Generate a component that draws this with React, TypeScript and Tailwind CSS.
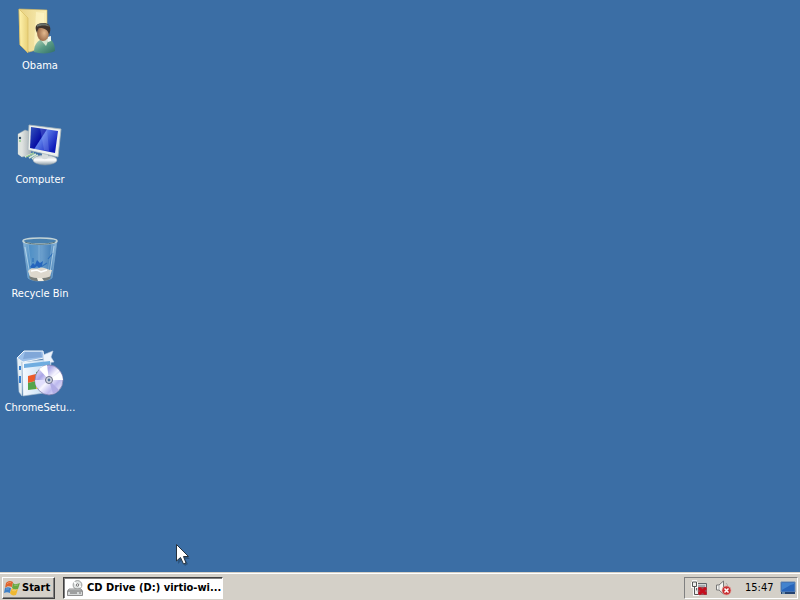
import type { ReactNode } from "react";

function UserFolderIcon() {
  return (
    <svg viewBox="0 0 48 48" className="size-12" aria-hidden="true">
      <defs>
        <linearGradient id="folder" x1="0" x2="1"><stop stopColor="#fff3ae" /><stop offset="1" stopColor="#e8d078" /></linearGradient>
        <linearGradient id="back" x1="0" x2="1"><stop stopColor="#e9d283" /><stop offset="1" stopColor="#f8eeb8" /></linearGradient>
        <linearGradient id="coat" x1="0" y1="0" x2="1" y2="1"><stop stopColor="#b9d8bc" /><stop offset=".5" stopColor="#5b9c86" /><stop offset="1" stopColor="#2f6d66" /></linearGradient>
        <radialGradient id="face" cx=".6" cy=".5"><stop stopColor="#e3b98e" /><stop offset="1" stopColor="#a0704d" /></radialGradient>
      </defs>
      <path d="M3 1L31 2V39L13 44L4 37Z" fill="url(#back)" stroke="#d5b95e" strokeWidth=".6" />
      <path d="M20 4L28 5V34L18 38Z" fill="#fff6c9" opacity=".6" />
      <path d="M3 1L12 10V45L4 37Z" fill="url(#folder)" stroke="#d9bf66" strokeWidth=".7" />
      <path d="M18 44C18 36 22 32 27 31L34 31C37 33 39 37 39 43C34 46 24 46 18 44Z" fill="url(#coat)" />
      <path d="M24 31L33 31L30 38Z" fill="#d5e4cf" />
      <path d="M31 29L35 28L35 33L32 34Z" fill="#edf4ef" />
      <ellipse cx="27" cy="25" rx="6" ry="8" fill="url(#face)" />
      <path d="M21 25C17 17 22 15 28 15C34 15 36 20 33 27C32 22 29 20 24 20C22 20 22 22 21 25Z" fill="#3f332b" />
      <path d="M21 17C25 14 32 15 34 19C30 17 25 17 21 19Z" fill="#69716a" />
    </svg>
  );
}

function ComputerIcon() {
  return (
    <svg viewBox="0 0 48 48" className="size-12" aria-hidden="true">
      <defs>
        <linearGradient id="screen" x1="0" y1="0" x2="1" y2=".6"><stop stopColor="#3558bd" /><stop offset=".45" stopColor="#0810a5" /><stop offset=".47" stopColor="#0810a5" /><stop offset=".5" stopColor="#5c7dea" /><stop offset="1" stopColor="#0c18b8" /></linearGradient>
        <linearGradient id="tower" x1="0" x2="1"><stop stopColor="#f9faf5" /><stop offset="1" stopColor="#a6afb4" /></linearGradient>
        <linearGradient id="base" x1="0" y1="0" x2="0" y2="1"><stop stopColor="#bac2c5" /><stop offset=".5" stopColor="#fff" /><stop offset="1" stopColor="#899aa5" /></linearGradient>
      </defs>
      <path d="M2 12L9 8L15 10V33L6 35L2 32Z" fill="url(#tower)" stroke="#9ba8ae" strokeWidth=".5" />
      <path d="M2 12L6 14V35L2 32Z" fill="#dfe4e0" />
      <circle cx="4" cy="16" r="1.2" fill="#36506a" /><circle cx="4" cy="19" r=".7" fill="#3cae36" />
      <path d="M9 35L18 31M13 36L20 32M16 37L22 33" stroke="#d9ead3" strokeWidth="1.8" />
      <path d="M10 35L18 31" stroke="#62ab55" strokeWidth=".7" />
      <ellipse cx="29" cy="38" rx="12" ry="5" fill="url(#base)" stroke="#8c9ba6" strokeWidth=".5" />
      <path d="M26 31H32V36C30 38 26 37 26 36Z" fill="#d7dcdd" />
      <path d="M13 3L45 7L42 35L12 28Z" fill="#edf0ed" stroke="#a8b6bd" strokeWidth=".8" />
      <path d="M15 5L42 9L39 31L14 26Z" fill="url(#screen)" />
      <path d="M24 6L31 7L33 29L28 28Z" fill="#9eb8fa" opacity=".25" />
    </svg>
  );
}

function RecycleIcon() {
  return (
    <svg viewBox="0 0 48 48" className="size-12" aria-hidden="true">
      <defs><linearGradient id="glass" x1="0" x2="1"><stop stopColor="#a8cfe9" /><stop offset=".2" stopColor="#579bd0" /><stop offset=".55" stopColor="#78acd7" /><stop offset=".8" stopColor="#4e8ac1" /><stop offset="1" stopColor="#b1d7ee" /></linearGradient></defs>
      <path d="M7 5L12 42C16 46 31 46 36 42L41 5Z" fill="url(#glass)" opacity=".78" stroke="#8ebadb" strokeWidth=".7" />
      <path d="M12 8L16 38M23 8V33M36 8L32 37" stroke="#b7d8ed" opacity=".3" />
      <path d="M14 31L17 27L19 29L21 24L24 27L27 25L26 30L23 32L21 30L17 33Z" fill="#2565bd" />
      <path d="M17 22V26M25 31L31 27M32 23L37 17" fill="none" stroke="#2e6fb9" strokeWidth="1.1" />
      <path d="M12 35C17 30 19 34 23 32C28 30 31 34 36 34L34 41C29 45 18 45 14 41Z" fill="#ded8cd" />
      <path d="M15 35L21 34L25 36L31 34" fill="none" stroke="#fff" strokeWidth="1.5" />
      <path d="M13 40C19 43 29 43 35 40L34 43C29 46 18 46 14 43Z" fill="#777c79" />
      <path d="M21 42L26 42L28 45H22Z" fill="#f4f0e5" />
      <ellipse cx="24" cy="5" rx="17" ry="3" fill="#477fae" stroke="#c3d3d6" strokeWidth="1.5" />
      <path d="M9 6C16 9 32 9 39 6" fill="none" stroke="#58747c" />
      <path d="M9 11L14 39M38 10L34 37" stroke="#d7edf8" opacity=".6" />
    </svg>
  );
}

function SetupIcon() {
  return (
    <svg viewBox="0 0 48 48" className="size-12" aria-hidden="true">
      <defs>
        <linearGradient id="box" x1="0" x2="1"><stop stopColor="#f6faff" /><stop offset="1" stopColor="#b9d7f1" /></linearGradient>
        <linearGradient id="disc" x1="0" y1="0" x2="1" y2="1"><stop stopColor="#fff" /><stop offset=".3" stopColor="#aaa5e6" /><stop offset=".5" stopColor="#f7f6ff" /><stop offset=".7" stopColor="#bcb9ee" /><stop offset="1" stopColor="#fff" /></linearGradient>
      </defs>
      <path d="M1 8L6 11V46L3 42Z" fill="#e6eff5" stroke="#9fbad1" strokeWidth=".6" />
      <path d="M6 12L35 9V42L7 46Z" fill="url(#box)" stroke="#a2b9cc" strokeWidth=".6" />
      <path d="M1 8L8 1L27 1L28 8L7 12Z" fill="#9bbfe9" stroke="#f1f7fc" strokeWidth="1" />
      <path d="M9 2L25 2L26 7L7 9Z" fill="#759dd0" opacity=".7" />
      <path d="M27 5L37 1L35 7L38 12L28 13Z" fill="#edf4fc" stroke="#c0d0e5" strokeWidth=".6" />
      <path d="M8 14L34 11V15L8 18Z" fill="#70ade0" />
      <path d="M3 16H5V20H3ZM3 26H5V33H3Z" fill="#387fd0" />
      <path d="M12 26L20 24V31L12 33Z" fill="#ed5b29" /><path d="M20 22L29 20V30L20 32Z" fill="#55aa41" />
      <path d="M12 33L20 31V39L12 40Z" fill="#54a44b" /><path d="M20 31L27 30V38L20 39Z" fill="#eebd27" />
      <ellipse cx="33" cy="30" rx="14" ry="15" fill="url(#disc)" stroke="#8180ac" strokeWidth=".8" />
      <path d="M33 30L23 19A15 15 0 0 1 31 15Z" fill="#fff" /><path d="M33 30L44 22A15 15 0 0 1 47 30Z" fill="#fff" />
      <path d="M33 30L43 40A15 15 0 0 1 37 44Z" fill="#b0ace5" /><path d="M33 30L21 38A15 15 0 0 1 19 30Z" fill="#e1dffc" />
      <circle cx="33" cy="30" r="3.5" fill="#d1d5e1" stroke="#686d86" strokeWidth="1" /><circle cx="33" cy="30" r="1.4" fill="#537398" />
    </svg>
  );
}

function StartLogo() {
  return (
    <svg viewBox="0 0 16 16" className="size-4 shrink-0" aria-hidden="true">
      <path d="M2 3C5 0 7 1 9 2L8 7C5 6 3 6 1 8Z" fill="#e0642c" />
      <path d="M9 3C11 5 13 4 16 3L14 9C11 10 9 9 8 8Z" fill="#67a83e" />
      <path d="M1 8C3 7 5 7 7 8L6 13C4 12 2 12 0 13Z" fill="#3e80c7" />
      <path d="M8 8C10 10 12 10 14 9L12 15C9 16 7 15 6 13Z" fill="#efb831" />
      <path d="M3 4C5 2 6 2 7 3M10 5C11 6 13 5 14 5M2 9H5M8 10C10 11 11 11 12 10" fill="none" stroke="#fff" strokeWidth=".8" opacity=".35" />
    </svg>
  );
}

function DriveIcon() {
  return (
    <svg viewBox="0 0 16 16" className="size-4 shrink-0" aria-hidden="true">
      <circle cx="10.5" cy="5" r="4.4" fill="#e2e5e4" stroke="#858989" strokeWidth=".8" />
      <path d="M10 5L7 2M11 5L14 7" stroke="#fff" strokeWidth="1.5" />
      <circle cx="10.5" cy="5" r="1.2" fill="#fff" stroke="#777" />
      <path d="M2 9H14L15.5 11V15.5H.5V11Z" fill="#d6d9d9" stroke="#777" strokeWidth=".8" />
      <path d="M1 11H15M3 13H10" stroke="#666" /><path d="M12 13H14" stroke="#777" />
    </svg>
  );
}

function NetworkIcon() {
  return (
    <svg viewBox="0 0 17 16" className="h-4 w-[17px]" aria-hidden="true">
      <path d="M5.5 3.5H15.5V13.5H5.5Z" fill="#d0d4d4" stroke="#60656a" />
      <path d="M7 5H14V11H7Z" fill="#a4a9ad" />
      <path d="M1.5 2V6.5H5.5V2M2.5 0V2M4.5 0V2M3.5 6V14.5H8" fill="none" stroke="#f8f8f8" strokeWidth="3" />
      <path d="M1.5 2V6.5H5.5V2ZM3.5 7V14.5H8" fill="#eee" stroke="#555" />
      <path d="M7 7H16V15H7Z" fill="#9b4a53" />
      <path d="M8 8L15 14M15 8L8 14" stroke="#c70c1c" strokeWidth="2.8" />
    </svg>
  );
}

function VolumeIcon() {
  return (
    <svg viewBox="0 0 17 16" className="h-4 w-[17px]" aria-hidden="true">
      <path d="M1.5 5H4L8.5 1V14L4 10H1.5Z" fill="#f5f5f2" stroke="#777" /><path d="M4 5V10" stroke="#aaa" />
      <path d="M11 3C13 5 13 7 12 9" fill="none" stroke="#aaa" />
      <circle cx="11.5" cy="10.5" r="4.5" fill="#c83032" stroke="#e2a39e" strokeWidth=".7" /><path d="M9.5 8.5L13.5 12.5M13.5 8.5L9.5 12.5" stroke="#fff" strokeWidth="1.5" />
    </svg>
  );
}

function ShowDesktopIcon() {
  return (
    <svg viewBox="0 0 16 16" className="size-4" aria-hidden="true">
      <path d="M1 2H15V12H1Z" fill="#2865ba" stroke="#6185b1" />
      <path d="M2 3H14V4C9 5 6 8 2 10Z" fill="#4383ce" /><path d="M1 12H15V14H1Z" fill="#24436f" /><path d="M2 13H5" stroke="#a8d2e9" />
    </svg>
  );
}

function Shortcut({ label, icon }: { label: string; icon: ReactNode }) {
  return (
    <button type="button" className="flex h-[114px] w-full flex-col items-center pt-2 text-white">
      {icon}
      <span className="whitespace-nowrap leading-5">{label}</span>
    </button>
  );
}

export default function App() {
  return (
    <div className="flex h-screen flex-col overflow-hidden bg-[#3b6ea5] font-['DejaVu_Sans_Condensed','DejaVu_Sans',sans-serif] text-[11px] text-black">
      <main className="relative min-h-0 flex-1">
        <nav aria-label="Desktop" className="w-20">
          <Shortcut label="Obama" icon={<UserFolderIcon />} />
          <Shortcut label="Computer" icon={<ComputerIcon />} />
          <Shortcut label="Recycle Bin" icon={<RecycleIcon />} />
          <Shortcut label="ChromeSetu..." icon={<SetupIcon />} />
        </nav>
        <svg viewBox="0 0 14 22" className="absolute top-[544px] left-[176px] h-[22px] w-[14px]" aria-hidden="true">
          <path d="M2 3V20L6 16L9 22L12 20L9 15H14Z" fill="#193653" opacity=".45" />
          <path d="M.5 .5V17L4.5 13.5L7.5 20L10 19L7.5 12.5H12.5Z" fill="#fff" stroke="#26323e" />
        </svg>
      </main>
      <footer className="flex h-7 shrink-0 items-center border-t border-[#d4d0c8] bg-[#d4d0c8] px-0.5 pt-0.5 shadow-[inset_0_1px_0_#fff]">
        <button type="button" className="flex h-[22px] w-[53px] items-center gap-0.5 border border-t-white border-r-[#404040] border-b-[#404040] border-l-white pl-px font-bold shadow-[inset_-1px_-1px_0_#808080]">
          <StartLogo />
          <span className="pt-px">Start</span>
        </button>
        <button type="button" className="ml-2 flex h-[22px] w-40 items-center gap-1 border border-t-[#404040] border-r-white border-b-white border-l-[#404040] bg-white pl-[3px] font-bold shadow-[inset_1px_1px_0_#808080]">
          <DriveIcon />
          <span className="whitespace-nowrap pt-px">CD Drive (D:) virtio-wi...</span>
        </button>
        <div className="ml-auto flex h-[22px] items-center border border-t-[#808080] border-r-white border-b-white border-l-[#808080] pr-px pl-1.5">
          <div className="flex items-center gap-[7px]">
            <NetworkIcon />
            <VolumeIcon />
          </div>
          <time className="ml-[13px] w-7 whitespace-nowrap pt-px">15:47</time>
          <button type="button" aria-label="Show desktop" className="ml-[7px]"><ShowDesktopIcon /></button>
        </div>
      </footer>
    </div>
  );
}
